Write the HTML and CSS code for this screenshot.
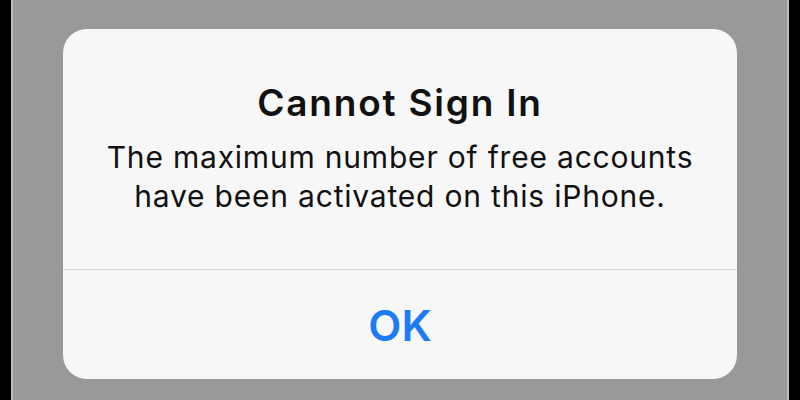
FILE: index.html
```html
<!DOCTYPE html>
<html lang="en">
<head>
    <meta charset="UTF-8">
    <meta name="viewport" content="width=device-width, initial-scale=1.0">
    <title>Cannot Sign In</title>
    <link rel="stylesheet" href="styles.css">
</head>
<body>
    <div class="screen">
        <div class="alert">
            <div class="alert-body">
                <h2 class="alert-title">Cannot Sign In</h2>
                <p class="alert-message">The maximum number of free accounts<br>have been activated on this iPhone.</p>
            </div>
            <button class="alert-button">OK</button>
        </div>
    </div>
</body>
</html>
```

FILE: styles.css
```css
body {
    margin: 0;
    padding: 0;
    background: #000;
    font-family: 'Inter', 'Liberation Sans', sans-serif;
    overflow: hidden;
}
.screen {
    margin: 0 11px;
    height: 400px;
    background: #999;
    border-left: 2px solid #bdbdbd;
    border-right: 2px solid #bdbdbd;
    padding-top: 29px;
    box-sizing: border-box;
}
.alert {
    margin: 0 50px;
    height: 350px;
    background: #f7f7f7;
    border-radius: 24px;
    display: flex;
    flex-direction: column;
    overflow: hidden;
}
.alert-body {
    height: 241px;
    border-bottom: 1px solid #d8d8dc;
    text-align: center;
    box-sizing: border-box;
    padding-top: 52px;
}
.alert-title {
    margin: 0;
    font-size: 37px;
    font-weight: 600;
    letter-spacing: 1.8px;
    color: #111;
    line-height: 44px;
}
.alert-message {
    margin: 13px 0 0;
    font-size: 30px;
    line-height: 39px;
    letter-spacing: 0.8px;
    color: #111;
}
.alert-button {
    flex: 1;
    background: none;
    border: none;
    color: #1b7cf3;
    font-family: inherit;
    font-size: 43px;
    font-weight: 600;
    cursor: pointer;
    padding: 0;
}
```
